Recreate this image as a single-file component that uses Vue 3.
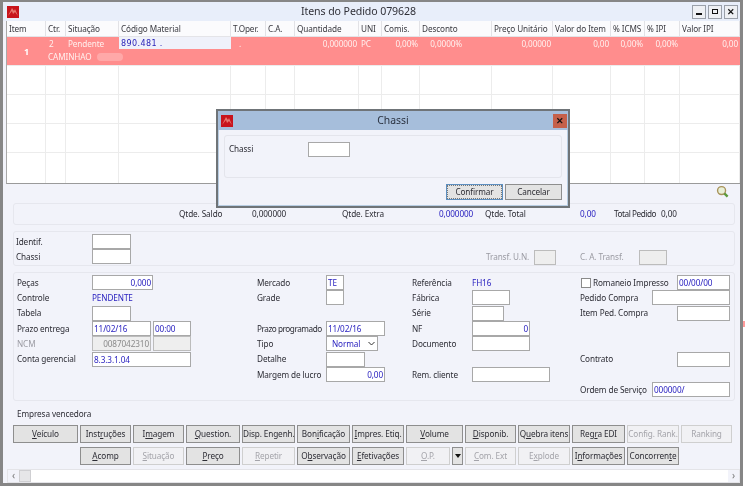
<script setup>
const cols = [39,20,53,112,35,29,64,23,38,72,61,58,34,35,60]
const gridCols = cols.map(c => c + 'px').join(' ')
const heads = ['Item','Ctr.','Situação','Código Material','T.Oper.','C.A.','Quantidade','UNI','Comis.','Desconto','Preço Unitário','Valor do Item','% ICMS','% IPI','Valor IPI']
const row1 = [
  { t: 'Veículo', u: 0 }, { t: 'Instruções', u: 4 }, { t: 'Imagem', u: 1 }, { t: 'Question.', u: 0 },
  { t: 'Disp. Engenh.', u: -1 }, { t: 'Bonificação', u: 3 }, { t: 'Impres. Etiq.', u: 0 }, { t: 'Volume', u: 0 },
  { t: 'Disponib.', u: 0 }, { t: 'Quebra itens', u: 1 }, { t: 'Regra EDI', u: 3 },
  { t: 'Config. Rank.', u: -1, off: true }, { t: 'Ranking', u: -1, off: true }
]
const row2 = [
  { t: 'Acomp', u: 0 }, { t: 'Situação', u: 0, off: true }, { t: 'Preço', u: 0 }, { t: 'Repetir', u: 0, off: true },
  { t: 'Observação', u: 1 }, { t: 'Efetivações', u: 0 }, { t: 'O.P.', u: 0, off: true, drop: true },
  { t: 'Com. Ext', u: 0, off: true }, { t: 'Explode', u: 1, off: true }, { t: 'Informações', u: 1 }, { t: 'Concorrente', u: 9 }
]
const parts = b => b.u < 0 ? [b.t, '', ''] : [b.t.slice(0, b.u), b.t[b.u], b.t.slice(b.u + 1)]
</script>

<template>
  <div class="page">
    <div class="window">
      <div class="titlebar">
        <svg class="logo" viewBox="0 0 12 12"><rect width="12" height="12" fill="#c8141c"/><path d="M1 10 5 2l2 3 1-2 3 7-3-4-2 2-1-3z" fill="#e87870"/></svg>
        <div class="title">Itens do Pedido 079628</div>
        <div class="winbtns">
          <span class="wb"><i class="ic-min"></i></span>
          <span class="wb"><i class="ic-max"></i></span>
          <span class="wb ic-x">✕</span>
        </div>
      </div>

      <div class="grid">
        <div class="g-row g-head" :style="{ gridTemplateColumns: gridCols }">
          <div v-for="h in heads" :key="h" class="g-h">{{ h }}</div>
        </div>
        <div class="g-row g-red" :style="{ gridTemplateColumns: gridCols }">
          <div class="r-num">1</div>
          <div class="r-c c2">2</div>
          <div class="r-c">Pendente</div>
          <div class="r-code">890.481 .</div>
          <div class="r-c c-dot">.</div>
          <div></div>
          <div class="r-c r-right">0,000000</div>
          <div class="r-c">PC</div>
          <div class="r-c r-right">0,00%</div>
          <div class="r-c r-right r-desc">0,0000%</div>
          <div class="r-c r-right">0,00000</div>
          <div class="r-c r-right">0,00</div>
          <div class="r-c r-right">0,00%</div>
          <div class="r-c r-right">0,00%</div>
          <div class="r-c r-right">0,00</div>
          <div class="r-sub">CAMINHAO <span class="blot"></span></div>
        </div>
        <div v-for="n in 4" :key="n" class="g-row g-empty" :class="{ last: n === 4 }" :style="{ gridTemplateColumns: gridCols }">
          <div v-for="(c, i) in cols" :key="i" class="g-e"></div>
        </div>
      </div>

      <div class="content">
        <div class="zoom-line">
          <svg class="lens" viewBox="0 0 14 14">
            <circle cx="6" cy="6" r="4.3" fill="#e8f0d8" stroke="#a8925a" stroke-width="1.5"/>
            <path d="M9 9l3.5 3.5" stroke="#5d9a3c" stroke-width="2.6"/>
          </svg>
        </div>

        <section class="panel p-totals">
          <span class="t w-a">Qtde. Saldo</span>
          <span class="t w-b">0,000000</span>
          <span class="t w-c">Qtde. Extra</span>
          <span class="t blue w-d">0,000000</span>
          <span class="t w-e">Qtde. Total</span>
          <span class="t blue w-f">0,00</span>
          <span class="t w-g tight">Total Pedido</span>
          <span class="t">0,00</span>
        </section>

        <section class="panel p-id">
          <div class="id-left">
            <div class="f-row"><label class="l-id">Identif.</label><input class="in w39" /></div>
            <div class="f-row"><label class="l-id">Chassi</label><input class="in w39" /></div>
          </div>
          <div class="id-right">
            <label class="muted l-tu">Transf. U.N.</label><input class="in dis w22" disabled />
            <label class="muted l-ca">C. A. Transf.</label><input class="in dis w28" disabled />
          </div>
        </section>

        <section class="panel p-form">
          <div class="col col1">
            <div class="f-row"><label>Peças</label><input class="in w61 right" value="0,000" /></div>
            <div class="f-row"><label>Controle</label><span class="blue">PENDENTE</span></div>
            <div class="f-row"><label>Tabela</label><input class="in w39" /></div>
            <div class="f-row"><label>Prazo entrega</label><input class="in w59 val" value="11/02/16" /><input class="in w38 val" value="00:00" /></div>
            <div class="f-row"><label class="muted">NCM</label><input class="in w59 dis right" disabled value="0087042310" /><input class="in w38 dis" disabled /></div>
            <div class="f-row"><label>Conta gerencial</label><input class="in w99 val" value="8.3.3.1.04" /></div>
          </div>
          <div class="col col2">
            <div class="f-row"><label>Mercado</label><input class="in w18 val" value="TE" /></div>
            <div class="f-row"><label>Grade</label><input class="in w18" /></div>
            <div class="f-row"></div>
            <div class="f-row"><label class="tight">Prazo programado</label><input class="in w59 val" value="11/02/16" /></div>
            <div class="f-row"><label>Tipo</label><div class="in w52 sel"><span>Normal</span><svg viewBox="0 0 7 5"><path d="M.5 1 3.5 4l3-3" fill="none" stroke="#333" stroke-width="1"/></svg></div></div>
            <div class="f-row"><label>Detalhe</label><input class="in w39" /></div>
            <div class="f-row"><label>Margem de lucro</label><input class="in w59 right" value="0,00" /></div>
          </div>
          <div class="col col3">
            <div class="f-row"><label>Referência</label><span class="blue">FH16</span></div>
            <div class="f-row"><label>Fábrica</label><input class="in w38" /></div>
            <div class="f-row"><label>Série</label><input class="in w32" /></div>
            <div class="f-row"><label>NF</label><input class="in w58 right" value="0" /></div>
            <div class="f-row"><label>Documento</label><input class="in w58" /></div>
            <div class="f-row"></div>
            <div class="f-row"><label>Rem. cliente</label><input class="in w78" /></div>
          </div>
          <div class="col col4">
            <div class="f-row"><span class="check"></span><span>Romaneio Impresso</span><input class="in w53 val push" value="00/00/00" /></div>
            <div class="f-row"><span>Pedido Compra</span><input class="in w78 push" /></div>
            <div class="f-row"><span>Item Ped. Compra</span><input class="in w53 push" /></div>
            <div class="f-row"></div>
            <div class="f-row"></div>
            <div class="f-row"><span>Contrato</span><input class="in w53 push" /></div>
            <div class="f-row"></div>
            <div class="f-row"><span>Ordem de Serviço</span><input class="in w78 val push" value="000000/" /></div>
          </div>
        </section>

        <div class="vencedora">Empresa vencedora</div>

        <div class="btn-grid">
          <div v-for="b in row1" :key="b.t" class="cell">
            <button class="b" :class="{ off: b.off }">{{ parts(b)[0] }}<u>{{ parts(b)[1] }}</u>{{ parts(b)[2] }}</button>
          </div>
          <div class="cell"></div>
          <div v-for="b in row2" :key="b.t" class="cell">
            <button class="b" :class="{ off: b.off }">{{ parts(b)[0] }}<u>{{ parts(b)[1] }}</u>{{ parts(b)[2] }}</button>
            <button v-if="b.drop" class="b drop"><i></i></button>
          </div>
        </div>

        <div class="hscroll">
          <span class="arrow">‹</span>
          <span class="thumb"></span>
          <span class="track"></span>
          <span class="arrow">›</span>
        </div>
      </div>
    </div>

    <span class="stray"></span>

    <div class="dialog">
      <div class="d-title">
        <svg class="logo d-logo" viewBox="0 0 12 12"><rect width="12" height="12" fill="#c8141c"/><path d="M1 10 5 2l2 3 1-2 3 7-3-4-2 2-1-3z" fill="#e87870"/></svg>
        <div class="d-name">Chassi</div>
        <span class="d-close">✕</span>
      </div>
      <div class="d-body">
        <div class="d-panel">
          <label>Chassi</label>
          <input class="in d-in" />
        </div>
        <div class="d-actions">
          <button class="b d-b focus">Confirmar</button>
          <button class="b d-b">Cancelar</button>
        </div>
      </div>
    </div>
  </div>
</template>

<style>
html, body { margin: 0; background: #fff; }
</style>

<style scoped>
.page {
  position: relative; width: 745px; height: 489px; overflow: hidden; background: #fff;
  font: 8.2px/1 "Noto Sans", "Liberation Sans", sans-serif; letter-spacing: -.1px; color: #2c2c34; filter: blur(.3px);
}
.window {
  width: 743px; height: 486px; box-sizing: border-box; border: solid #868686; border-width: 2px 3px 3px 3px;
  background: #f2f3fa; display: flex; flex-direction: column;
}
.titlebar { height: 19px; flex: none; background: #e8eefa; display: flex; align-items: center; position: relative; padding-left: 4px; }
.logo { width: 12px; height: 12px; flex: none; }
.title { position: absolute; left: 0; right: 26px; text-align: center; font-size: 10.6px; letter-spacing: -.1px; color: #303038; pointer-events: none; }
.winbtns { margin-left: auto; display: flex; gap: 2px; margin-right: 2px; }
.wb { width: 12px; height: 12px; border: 1px solid #9aa0aa; background: #eef0f4; display: flex; align-items: center; justify-content: center; font-size: 9px; font-weight: 700; color: #111; }
.ic-min { width: 6px; height: 2px; background: #111; margin-top: 4px; }
.ic-max { width: 4px; height: 3px; border: 1.5px solid #111; }

.grid { margin: 0 0 0 3px; width: 733px; height: 162px; flex: none; background: #fff; border-bottom: 1px solid #9a9a9a; border-left: 1px solid #a8a8a8; overflow: hidden; box-sizing: content-box; }
.g-row { display: grid; }
.g-head { height: 15px; background: #fbfbfd; border-bottom: 1px solid #e4e4e8; }
.g-h { padding: 4px 0 0 2px; border-right: 1px solid #e2e2e6; color: #3a3a40; white-space: nowrap; overflow: hidden; }
.g-red { background: #ff8d8d; height: 29px; grid-template-rows: 12px 17px; color: #fff0ee; border-bottom: 1px solid #ececec; box-sizing: border-box; position: relative; }
.r-num { grid-row: 1 / 3; display: flex; align-items: center; justify-content: center; font-weight: 700; font-size: 9px; color: #fff; }
.r-c { padding: 3px 2px 0; white-space: nowrap; }
.c2 { padding-left: 3px; }
.c-dot { padding-left: 8px; }
.r-right { text-align: right; }
.r-desc { padding-right: 30px; }
.r-code { background: #eff1fa; color: #2a22b8; padding: 3px 0 0 2px; letter-spacing: .4px; font-family: "DejaVu Sans", sans-serif; font-size: 8px; }
.r-sub { grid-column: 2 / 6; padding: 4px 2px 0; white-space: nowrap; }
.blot { display: inline-block; width: 26px; height: 8px; border-radius: 4px; background: #ffa8a8; margin-left: 3px; vertical-align: -1px; }
.g-empty { height: 29px; border-bottom: 1px solid #ececec; box-sizing: border-box; }
.g-empty.last { border-bottom: 0; height: 30px; }
.g-e { border-right: 1px solid #ececec; }

.content { flex: 1; display: flex; flex-direction: column; padding: 0 5px 0 4px; min-height: 0; }
.zoom-line { height: 19px; display: flex; justify-content: flex-end; align-items: flex-start; flex: none; }
.lens { width: 13px; height: 13px; margin: 1px 6px 0 0; }
.panel { border: 1px solid #e6e7ee; border-radius: 3px; margin: 0 0 6px 6px; box-sizing: border-box; width: 722px; flex: none; }
.p-totals { height: 22px; display: flex; align-items: center; padding-left: 165px; padding-top: 1px; }
.t { flex: none; white-space: nowrap; }
.w-a { width: 73px; } .w-b { width: 90px; } .w-c { width: 97px; } .w-d { width: 46px; } .w-e { width: 95px; } .w-f { width: 34px; } .w-g { width: 47px; }
.tight { letter-spacing: -.45px; }
.blue { color: #2a22c0; }
.muted { color: #9a9aa2; }
.p-id { height: 35px; display: flex; padding-left: 2px; position: relative; justify-content: space-between; }
.id-left { display: flex; flex-direction: column; padding-top: 2px; }
.f-row { height: 15.33px; display: flex; align-items: center; flex: none; white-space: nowrap; }
.l-id { width: 76px; }
.id-right { display: flex; align-items: center; height: 15px; margin-top: 18px; margin-right: 67px; }
.l-tu { width: 48px; } .l-ca { width: 59px; margin-left: 24px; }
.in { box-sizing: border-box; height: 15px; border: 1px solid #a8a8a8; background: #fff; padding: 0 1px; font: inherit; letter-spacing: inherit; color: #2a22c0; min-width: 0; flex: none; outline: 0; margin: 0; border-radius: 0; }
.val { color: #2a22c0; }
.right { text-align: right; }
.dis { background: #eeeeee; color: #8a8a8a; border-color: #bcbcbc; }
.w18 { width: 18px; } .w22 { width: 22px; } .w28 { width: 28px; } .w32 { width: 32px; } .w38 { width: 38px; margin-left: 2px; }
.w39 { width: 39px; } .w52 { width: 52px; } .w53 { width: 53px; } .w58 { width: 58px; } .w59 { width: 59px; } .w61 { width: 61px; } .w78 { width: 78px; } .w99 { width: 99px; }
.col3 .w38 { margin-left: 0; }
.p-form { height: 129px; display: flex; padding: 2px 0 0 3px; margin-bottom: 0; }
.col { display: flex; flex-direction: column; flex: none; }
.col1 { width: 240px; } .col2 { width: 155px; } .col3 { width: 168px; } .col4 { width: 150px; }
.col1 label { width: 75px; } .col2 label { width: 69px; } .col3 label { width: 60px; }
.sel { display: flex; align-items: center; justify-content: space-between; padding: 0 2px 0 5px; }
.sel svg { width: 7px; height: 5px; }
.check { width: 10px; height: 10px; box-sizing: border-box; border: 1px solid #8a8a8a; background: #fff; margin: 0 2px 0 1px; }
.push { margin-left: auto; }
.vencedora { margin: 9px 0 0 10px; height: 15px; flex: none; }
.btn-grid { display: grid; flex: none; grid-template-columns: 67px 53px 53px 56px 55px 55px 54px 59px 53px 54px 55px 54px 53px; grid-auto-rows: 22px; margin-left: 6px; width: 728px; }
.cell { display: flex; gap: 2px; height: 18px; padding-right: 2px; box-sizing: border-box; }
.b { flex: 1; min-width: 0; height: 18px; box-sizing: border-box; padding: 0; border: 1px solid #8e8e8e; background: #e3e3e3; font: inherit; letter-spacing: inherit; color: #2c2c34; white-space: nowrap; border-radius: 0; }
.b.off { background: #f1f1f4; border-color: #cfcfcf; color: #a4a4aa; }
.drop { flex: 0 0 11px; display: flex; align-items: center; justify-content: center; }
.drop i { width: 0; height: 0; border: 3px solid transparent; border-top: 4px solid #111; border-bottom: 0; }
.hscroll { height: 14px; display: flex; background: #fff; border: 1px solid #e4e4e8; width: 733px; flex: none; box-sizing: border-box; }
.arrow { width: 11px; text-align: center; color: #777; background: #f2f3fa; font-size: 10px; line-height: 11px; }
.thumb { width: 12px; background: #e6e6e8; border: 1px solid #cfcfd2; box-sizing: border-box; }
.track { flex: 1; }

.stray { position: absolute; left: 743px; top: 321px; width: 2px; height: 6px; background: #ff9a9a; }

.dialog { position: absolute; left: 216px; top: 109px; width: 354px; height: 99px; box-sizing: border-box; border: 2px solid #6f7478; background: #f2f3fa; display: flex; flex-direction: column; }
.d-title { height: 19px; background: #a6bedb; display: flex; align-items: center; position: relative; flex: none; padding-left: 2px; }
.d-logo { margin-left: 1px; }
.d-name { position: absolute; left: 0; right: 0; text-align: center; font-size: 10.4px; letter-spacing: 0; color: #2a3240; }
.d-close { margin-left: auto; margin-right: 1px; width: 14px; height: 14px; background: #c5604a; color: #111; font-size: 9px; font-weight: 700; display: flex; align-items: center; justify-content: center; position: relative; }
.d-body { flex: 1; padding: 5px 5px 0 5px; display: flex; flex-direction: column; border: 1px solid #b8cde2; border-top: 0; }
.d-panel { height: 43px; border: 1px solid #e4e5ec; border-radius: 3px; display: flex; align-items: flex-start; padding: 6px 0 0 4px; box-sizing: border-box; flex: none; }
.d-panel label { width: 79px; padding-top: 3px; }
.d-in { width: 42px; }
.d-actions { display: flex; justify-content: flex-end; gap: 2px; margin-top: 6px; }
.d-b { flex: 0 0 auto; width: 57px; height: 16px; color: #2c2c34; }
.focus { border: 1px solid #5d8fc0; outline: 1px dotted #777; outline-offset: -2px; }
</style>
